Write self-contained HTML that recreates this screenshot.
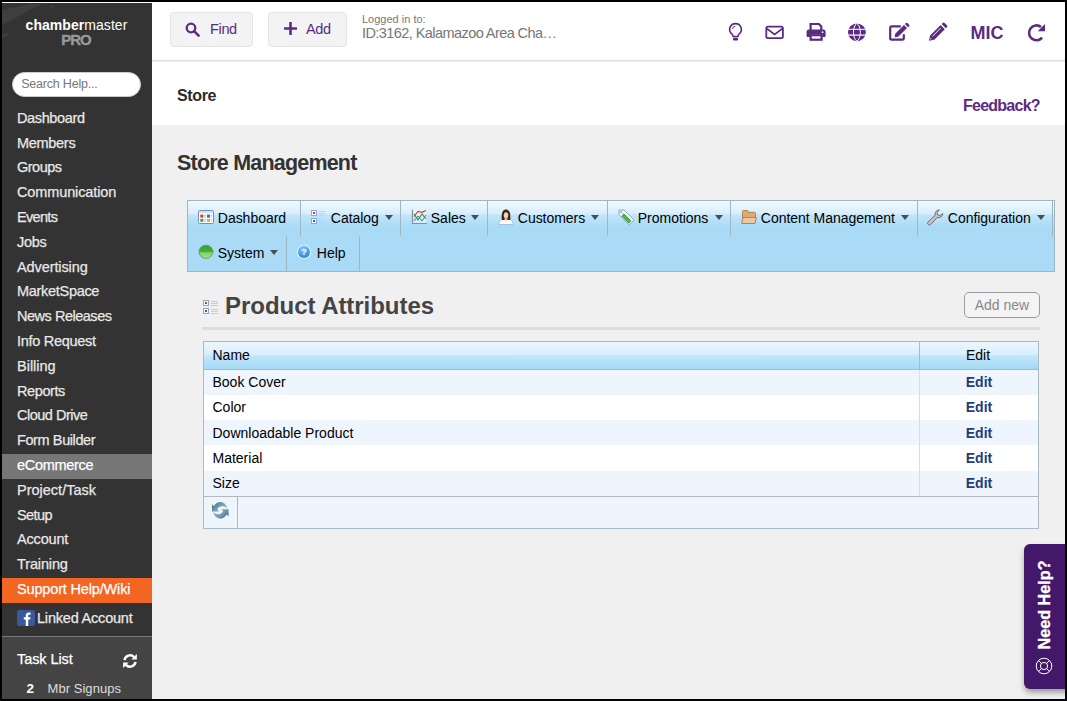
<!DOCTYPE html>
<html><head><meta charset="utf-8"><title>Store Management</title>
<style>
*{box-sizing:border-box;margin:0;padding:0}
html,body{width:1067px;height:701px;overflow:hidden;background:#000;font-family:"Liberation Sans",sans-serif}
#frame{position:absolute;left:2px;top:2px;width:1063px;height:697px;background:#f0f0f0;overflow:hidden}
/* ---------- sidebar ---------- */
#side{position:absolute;left:0;top:0;width:150px;height:697px;background:#333;color:#e8e8e8;overflow:hidden}
#side .topline{position:absolute;left:0;top:0;width:150px;height:1px;background:#fff}
#streak{position:absolute;left:0;top:1px}
#logo{position:absolute;left:-0.5px;top:16px;width:150px;text-align:center;font-size:14px;line-height:15px;color:#fff;letter-spacing:0.05px;white-space:nowrap}
#logo b{font-weight:bold}
#logo .pro{position:absolute;left:0;top:14px;width:150px;text-align:center;color:#999;font-weight:bold;font-size:15px;line-height:15px;letter-spacing:-1.1px;margin-left:-0.6px;-webkit-text-stroke:.3px #999}
#search{position:absolute;left:10.200px;top:69.500px;width:129px;height:25px;border-radius:13px;background:#fff;border:1px solid #ccc;color:#777;font-size:12.5px;line-height:23px;padding-left:8px;letter-spacing:-0.2px}
#nav{position:absolute;left:0;top:104.9px;width:150px;list-style:none}
#nav li{height:24.8px;line-height:22.8px;-webkit-text-stroke:0.25px currentColor;padding-left:15px;font-size:14.5px;color:#e8e8e8;white-space:nowrap;letter-spacing:-0.3px}
#nav li.act{background:#777;color:#fff}
#nav li.sup{background:#f26522;color:#fff}
#linked{position:absolute;left:15px;top:606px;height:20px;line-height:20px;font-size:14.5px;color:#e8e8e8;letter-spacing:-0.2px;-webkit-text-stroke:0.25px currentColor;white-space:nowrap}
#linked .fb{display:inline-block;vertical-align:top;margin-top:2px;margin-right:2px;width:18px;height:16px;background:#3b5998;border-radius:2px;position:relative}
#tasks{position:absolute;left:0;top:634px;width:150px;height:63px;background:#444;border-top:1px solid #777}
#tasks .t{position:absolute;left:15px;top:12px;font-size:14.5px;line-height:20px;color:#fff;letter-spacing:-0.08px;-webkit-text-stroke:0.25px currentColor}
#tasks .n{position:absolute;left:24.500px;top:44px;font-size:13.5px;line-height:16px;color:#fff;font-weight:bold}
#tasks .m{position:absolute;left:45.500px;top:44px;font-size:13px;line-height:16px;color:#ddd;letter-spacing:0.05px}
/* ---------- header ---------- */
#hdr{position:absolute;left:150px;top:0;width:913px;height:59px;background:#fff;border-bottom:1px solid #ddd}
.btn{position:absolute;top:10px;height:34.500px;border:1px solid #e4e4e4;border-radius:4px;background:#f3f3f3;color:#5b2b82;font-size:14.5px;line-height:33px;letter-spacing:-0.35px;white-space:nowrap}
.btn svg{position:absolute}
.btn span{position:absolute;top:0}
#logged{position:absolute;left:210px;top:10px;color:#777;white-space:nowrap}
#logged .l1{font-size:11px;line-height:13px;letter-spacing:0;display:block;position:relative;top:.6px}
#logged .l2{font-size:14.5px;line-height:17px;letter-spacing:-0.57px;display:block}
.ic{position:absolute}
#mic{position:absolute;left:818.600px;top:19.500px;font-weight:bold;font-size:18px;line-height:22px;color:#5b2b82;letter-spacing:-0.1px}
/* ---------- sub header ---------- */
#sub{position:absolute;left:150px;top:60px;width:913px;height:63px;background:#fff}
#sub .ttl{position:absolute;left:25px;top:24px;font-weight:bold;font-size:16px;line-height:20px;color:#2b2b2b;letter-spacing:-0.35px}
#sub .fb{position:absolute;left:811px;top:34px;font-weight:bold;font-size:16px;line-height:20px;color:#5b2b82;letter-spacing:-0.75px;white-space:nowrap}
#h1{position:absolute;left:175px;top:148px;font-weight:bold;font-size:21.500px;line-height:26px;color:#333;letter-spacing:-0.8px;white-space:nowrap}
/* ---------- store menu ---------- */
#menu{position:absolute;left:185px;top:198px;width:868px;height:72px;border:1px solid #9bb6c5;background:#a9dbf6;background:linear-gradient(#f6fbff 0,#eef8fe 1px,#d8eefb 12.500px,#c2e5fa 14px,#a9dbf6 26px,#a9dbf6 100%);font-size:14px;color:#000}
.mi{position:absolute;height:35px;border-right:1px solid #9fb5c2;white-space:nowrap}
.mi svg{position:absolute;top:8px}
.mi span{position:absolute;top:0;line-height:35px;margin-left:-0.2px;letter-spacing:-0.03px;padding-top:.3px}
.mi i{position:absolute;top:14px;width:0;height:0;border-left:4.5px solid transparent;border-right:4.5px solid transparent;border-top:5px solid #46505a}
/* ---------- section ---------- */
#sec .ico{position:absolute;left:201px;top:297px}
#sec h2{position:absolute;left:223px;top:290px;font-size:24px;line-height:28px;font-weight:bold;color:#444;white-space:nowrap;letter-spacing:-0.04px}
#addnew{position:absolute;left:962px;top:290px;width:76px;height:26px;border:1px solid #9c9c9c;border-radius:5px;background:#f4f4f4;color:#888;font-size:14px;line-height:24px;text-align:center}
#rule{position:absolute;left:200px;top:325px;width:838px;height:3px;background:#ddd}
/* ---------- grid ---------- */
#grid{position:absolute;left:201px;top:339px;width:836px;height:188px;border:1px solid #a7bac5;background:#fff;font-size:14px;color:#000}
#grid .hd{position:absolute;left:0;top:0;width:834px;height:28px;border-bottom:1px solid #a7bac5;background:linear-gradient(#ebf7fe 0,#d8eefb 46%,#c1e6fa 52%,#a5d9f5 100%)}
#grid .hd .c1{position:absolute;left:8.500px;top:0;line-height:27px}
#grid .hd .c2{position:absolute;left:715px;top:0;width:119px;height:27px;border-left:1px solid #a7bac5;text-align:center;line-height:27px;padding-right:2px}
.row{position:absolute;left:0;width:834px;line-height:25px}
.row.alt{background:#eff5fd}
.row .c1{position:absolute;left:8.500px;top:0}
.row .c2{position:absolute;left:715px;top:0;width:119px;height:100%;border-left:1px solid #dcdcdc;text-align:center;font-weight:bold;color:#1e3d7b}
#grid .ft{position:absolute;left:0;top:154px;width:834px;height:32px;border-top:1px solid #b4b8ba;background:#eff5fd}
#grid .ft .rf{position:absolute;left:0;top:0;width:34px;height:31px;border-right:1px solid #b6b6b6}
/* ---------- need help ---------- */
#help{position:absolute;left:1022px;top:542px;width:50px;height:145px;background:#43186b;border-radius:6px;box-shadow:0 4px 6px -1px rgba(0,0,0,.4)}
#help span{position:absolute;left:-40px;top:49.500px;width:120px;height:22px;line-height:22px;transform:rotate(-90deg);color:#fff;font-weight:bold;font-size:16.200px;text-align:center;white-space:nowrap;-webkit-text-stroke:.3px #fff}
</style></head><body>
<div id="frame">

<div id="side">
<svg id="streak" width="150" height="60" viewBox="0 0 150 60"><path d="M0 7.300L29 .7L41 1.200L30 5.600L20 11.200L8 18.200L0 22.300Z" fill="#3f3f3f"/><path d="M0 31L10 29.500L0 35.500Z" fill="#3d3d3d"/><path d="M49 3.500l2-1.500 1.200 1.500-1.500 2.500z" fill="#3c3c3c"/></svg>
<div class="topline"></div>
<div id="logo"><b>chamber</b>master<span class="pro">PRO</span></div>
<div id="search">Search Help...</div>
<ul id="nav">
<li style="letter-spacing:-0.37px">Dashboard</li>
<li style="letter-spacing:-0.3px">Members</li>
<li style="letter-spacing:-0.5px">Groups</li>
<li style="letter-spacing:-0.12px">Communication</li>
<li style="letter-spacing:-0.68px">Events</li>
<li style="letter-spacing:-0.3px">Jobs</li>
<li style="letter-spacing:-0.1px">Advertising</li>
<li style="letter-spacing:-0.3px">MarketSpace</li>
<li style="letter-spacing:-0.48px">News Releases</li>
<li style="letter-spacing:-0.3px">Info Request</li>
<li style="letter-spacing:0px">Billing</li>
<li style="letter-spacing:-0.4px">Reports</li>
<li style="letter-spacing:-0.5px">Cloud Drive</li>
<li style="letter-spacing:-0.4px">Form Builder</li>
<li class="act" style="letter-spacing:-0.3px">eCommerce</li>
<li style="letter-spacing:0px">Project/Task</li>
<li style="letter-spacing:-0.6px">Setup</li>
<li style="letter-spacing:-0.17px">Account</li>
<li style="letter-spacing:-0.13px">Training</li>
<li class="sup" style="letter-spacing:-0.16px">Support Help/Wiki</li>
</ul>
<div id="linked"><span class="fb"><svg width="17" height="16" viewBox="0 0 17 16"><path d="M11.2 16V9.6h2l.3-2.4h-2.3V5.8c0-.7.2-1.1 1.2-1.1h1.2V2.5c-.2 0-.9-.1-1.8-.1-1.8 0-3 1.100-3 3.100v1.700H6.800v2.400h2V16z" fill="#fff"/></svg></span>Linked Account</div>
<div id="tasks"><span class="t">Task List</span>
<svg class="ic" style="left:120px;top:15.500px" width="16" height="16" viewBox="0 0 14 14"><path d="M2.200 6.300A4.900 4.900 0 0 1 10.600 3.600" fill="none" stroke="#fff" stroke-width="2.200"/><path d="M13 .8V5.600H8.200z" fill="#fff"/><path d="M11.800 7.700A4.900 4.900 0 0 1 3.400 10.400" fill="none" stroke="#fff" stroke-width="2.200"/><path d="M1 13.200V8.400H5.800z" fill="#fff"/></svg>
<span class="n">2</span><span class="m">Mbr Signups</span></div>
</div>

<div id="hdr">
<div class="btn" style="left:18px;width:83px"><svg style="left:13.600px;top:8.500px" width="15" height="15" viewBox="0 0 15 15"><circle cx="6" cy="6" r="4.300" fill="none" stroke="#5b2b82" stroke-width="2.300"/><path d="M9.300 9.300L13.600 13.600" stroke="#5b2b82" stroke-width="2.600" stroke-linecap="round"/></svg><span style="left:39px">Find</span></div>
<div class="btn" style="left:116px;width:79px"><svg style="left:15px;top:9.300px" width="13" height="13" viewBox="0 0 13 13"><path d="M6.500 .8V12.200M.8 6.500H12.200" stroke="#5b2b82" stroke-width="2.600" stroke-linecap="round"/></svg><span style="left:37px">Add</span></div>
<div id="logged"><span class="l1">Logged in to:</span><span class="l2">ID:3162, Kalamazoo Area Cha…</span></div>

<svg class="ic" style="left:560px;top:0" width="353" height="59" viewBox="712 2 353 59" fill="#5b2b82" stroke="none">
<!-- lightbulb -->
<path d="M735.500 23.600a5.800 5.800 0 0 0-3.800 10.200c.9.900 1.300 1.700 1.400 2.700h4.800c.1-1 .5-1.800 1.400-2.700a5.800 5.800 0 0 0-3.800-10.200z" fill="none" stroke="#5b2b82" stroke-width="1.600"/>
<rect x="733" y="37.800" width="5" height="2.800" rx="1"/>
<path d="M732.600 28.800a3 3 0 0 1 2.700-2.700" fill="none" stroke="#5b2b82" stroke-width="1"/>
<!-- envelope -->
<rect x="766.300" y="26.600" width="16.600" height="11.600" rx="1.600" fill="none" stroke="#5b2b82" stroke-width="1.800"/>
<path d="M766.800 28.600l7.800 5.800 7.800-5.800" fill="none" stroke="#5b2b82" stroke-width="1.800"/>
<!-- printer -->
<path d="M810.600 30V24h8.200l2.500 2.500V30" fill="none" stroke="#5b2b82" stroke-width="2.200"/>
<path d="M808.800 29.500h14.600a2.200 2.200 0 0 1 2.200 2.200v4.400a1 1 0 0 1-1 1h-2.400v-2.900h-12.200v2.900h-2.400a1 1 0 0 1-1-1v-4.400a2.200 2.200 0 0 1 2.200-2.200z"/>
<rect x="810.600" y="35.200" width="11" height="4.500" fill="none" stroke="#5b2b82" stroke-width="2.200"/>
<circle cx="822.600" cy="32.200" r=".9" fill="#fff"/>
<!-- globe -->
<circle cx="856.900" cy="32.300" r="8.900"/>
<path d="M856.900 23.400c-4.600 3-4.600 14.800 0 17.800M856.900 23.400c4.600 3 4.600 14.800 0 17.800" fill="none" stroke="#fff" stroke-width="1"/>
<path d="M848 29.300h17.800" stroke="#fff" stroke-width="1" />
<path d="M848 35.100h17.800" stroke="#eee" stroke-width="1.300"/>
<!-- edit -->
<path d="M903.800 34.200V38.400a1.300 1.300 0 0 1-1.300 1.300H891.500a1.300 1.300 0 0 1-1.300-1.300V27.700a1.300 1.300 0 0 1 1.300-1.300h9.300" fill="none" stroke="#5b2b82" stroke-width="2.200"/>
<path d="M894.700 37.200l.5-3.400 8.800-8.800 3 3-8.800 8.800z"/>
<path d="M904.900 24.100l1.100-1.100a1.100 1.100 0 0 1 1.500 0l1.700 1.700a1.100 1.100 0 0 1 0 1.500l-1.100 1.100z"/>
<!-- pencil -->
<path d="M929 40.800l1.100-5.300 10.500-10.500 4.200 4.200-10.500 10.500z"/>
<path d="M941.600 24l1-1a1.400 1.400 0 0 1 2 0l2.300 2.300a1.400 1.400 0 0 1 0 2l-1 1z"/>
<path d="M932.500 36.300l8.200-8.200" stroke="#fff" stroke-width=".9"/>
<path d="M930.300 39.500l.4-1.600 1.200 1.200z" fill="#fff"/>
<!-- refresh -->
<path d="M1042.100 37.600A7.400 7.400 0 1 1 1041 27" fill="none" stroke="#5b2b82" stroke-width="2.600"/>
<path d="M1045 24v7.300h-7.300z"/>
</svg>
<div id="mic">MIC</div>
</div>

<div id="sub"><span class="ttl">Store</span><span class="fb">Feedback?</span></div>
<div id="h1">Store Management</div>

<div id="menu">
 <div class="mi" style="left:0;top:0;width:113px"><svg style="left:10px" width="16" height="16" viewBox="0 0 16 16"><rect x=".5" y="1.500" width="15" height="13" rx="1" fill="#fdfdfd" stroke="#6f8fbd"/><rect x="1" y="2" width="14" height="2.200" fill="#d3e0f3"/><rect x="2.300" y="5.600" width="3" height="3" fill="#e0392d"/><rect x="2.300" y="9.800" width="3" height="3" fill="#3aa537"/><rect x="9" y="5.600" width="3" height="3" fill="#3b6fc9"/><rect x="9" y="9.800" width="3" height="3" fill="#e8a917"/><path d="M6 6.500h2M6 8h2M6 10.700h2M6 12.200h2M12.700 6.500h1.600M12.700 8h1.600M12.700 10.700h1.600M12.700 12.200h1.600" stroke="#b9bec6" stroke-width=".8"/></svg><span style="left:30px">Dashboard</span></div>
 <div class="mi" style="left:113px;top:0;width:100px"><svg style="left:10px" width="16" height="16" viewBox="0 0 16 16"><rect x=".5" y="1.500" width="5" height="5" fill="#fff" stroke="#86abe6"/><rect x="2" y="3" width="2" height="2" fill="#e23a30"/><rect x=".5" y="9.500" width="5" height="5" fill="#fff" stroke="#86abe6"/><rect x="2" y="11" width="2" height="2" fill="#3565b5"/><path d="M7.500 2.500h6.500M7.500 4.500h6.500M7.500 6.500h6.500M7.500 10.500h6.500M7.500 12.500h6.500M7.500 14.500h6.500" stroke="#c9ced6" stroke-width=".9"/></svg><span style="left:30px">Catalog</span><i style="left:84px"></i></div>
 <div class="mi" style="left:213px;top:0;width:87px"><svg style="left:10px" width="16" height="16" viewBox="0 0 16 16"><rect x="1.500" y=".8" width="14" height="13.200" fill="#eef5fb" opacity=".7"/><path d="M1.500 .5V14.500H16" fill="none" stroke="#8a8f96" stroke-width="1.200"/><path d="M3 7.500l4-5 4 .8 4-1.800" fill="none" stroke="#e0392d" stroke-width="1.200"/><path d="M3 5l4 6 4-6 4 5" fill="none" stroke="#2f9e3a" stroke-width="1.200"/><path d="M3 12l4-5 4 5 4-6" fill="none" stroke="#3f78c8" stroke-width="1"/></svg><span style="left:30px">Sales</span><i style="left:70px"></i></div>
 <div class="mi" style="left:300px;top:0;width:120px"><svg style="left:10px" width="16" height="16" viewBox="0 0 16 16"><path d="M.8 15.500c.2-3.600 1.800-5.300 7.200-5.300s7 1.700 7.200 5.300z" fill="#fafcff" stroke="#a5bfe3"/><path d="M3.800 11C3 4 4.800.5 8 .5S13 4 12.200 11z" fill="#3b2a14"/><path d="M5.800 6.200C5.800 4 6.800 3.300 8 3.300s2.200.7 2.200 2.900c0 2-1 3.600-2.200 3.600S5.800 8.200 5.800 6.200z" fill="#f6d3b3"/><path d="M6.400 9.500h3.200l-.4 2.300h-2.400z" fill="#f1c6a2"/></svg><span style="left:30px">Customers</span><i style="left:103px"></i></div>
 <div class="mi" style="left:420px;top:0;width:123px"><svg style="left:9.500px;top:8px" width="17" height="17" viewBox="0 0 17 17"><path d="M1 1h5l10 10-4.800 4.800L1 5.800z" fill="#fdfdff" stroke="#8aa8da" stroke-width="1"/><path d="M6 4.800l7 7-2.300 2.300-7-7z" fill="#4cb848" stroke="#2f8a2f" stroke-width=".8" stroke-linejoin="round"/><circle cx="3.200" cy="3.200" r="1" fill="#fff" stroke="#7d92b5" stroke-width=".7"/></svg><span style="left:30px">Promotions</span><i style="left:107px"></i></div>
 <div class="mi" style="left:543px;top:0;width:187px"><svg style="left:10px" width="16" height="16" viewBox="0 0 16 16"><path d="M1.500 13.500V2.500a1 1 0 0 1 1-1h4l1.500 1.800h5.500a1 1 0 0 1 1 1v9.200z" fill="#dca978" stroke="#b9824e"/><path d="M.700 14.500l1.300-6h13.300l-1.300 6z" fill="#edc9a3" stroke="#b9824e"/></svg><span style="left:30px">Content Management</span><i style="left:170px"></i></div>
 <div class="mi" style="left:730px;top:0;width:135px"><svg style="left:9px" width="17" height="17" viewBox="0 0 17 17"><path d="M15.800 4.600a4.100 4.100 0 0 1-5.500 3.800l-6.500 7a1.800 1.800 0 0 1-2.600-2.600l7-6.500A4.100 4.100 0 0 1 12.500 1l-2.400 2.400.6 2.500 2.500.6z" fill="#c4c4c4" stroke="#6f6f6f" stroke-width="1"/></svg><span style="left:30px">Configuration</span><i style="left:119px"></i></div>
 <div class="mi" style="left:0;top:35px;width:99px"><svg style="left:9.500px;top:8px" width="16" height="16" viewBox="0 0 16 16"><defs><linearGradient id="gg" x1="0" y1="0" x2="0" y2="1"><stop offset="0" stop-color="#3c9f34"/><stop offset=".48" stop-color="#43ac39"/><stop offset=".56" stop-color="#7fce6b"/><stop offset="1" stop-color="#a4e08f"/></linearGradient></defs><ellipse cx="8" cy="7.800" rx="7" ry="6.600" fill="url(#gg)" stroke="#3f9a36" stroke-width=".7"/></svg><span style="left:30px">System</span><i style="left:82px"></i></div>
 <div class="mi" style="left:99px;top:35px;width:73px"><svg style="left:9px;top:8px" width="16" height="16" viewBox="0 0 16 16"><defs><radialGradient id="hg" cx=".45" cy=".3" r=".8"><stop offset="0" stop-color="#8fd0ff"/><stop offset=".6" stop-color="#3d9be6"/><stop offset="1" stop-color="#2b7fc7"/></radialGradient></defs><circle cx="8" cy="8" r="7.200" fill="#d9eefc"/><circle cx="8" cy="8" r="5.900" fill="url(#hg)"/><text x="8" y="11.300" font-family="Liberation Sans,sans-serif" font-size="9" font-weight="bold" fill="#fff" text-anchor="middle">?</text></svg><span style="left:30px">Help</span></div>
</div>

<div id="sec">
<svg class="ico" width="16" height="16" viewBox="0 0 16 16"><rect x=".5" y="1.500" width="5" height="5" fill="#fff" stroke="#8aa6c8"/><rect x="2" y="3" width="2" height="2" fill="#d33"/><rect x=".5" y="9.500" width="5" height="5" fill="#fff" stroke="#8aa6c8"/><rect x="2" y="11" width="2" height="2" fill="#36a"/><path d="M8 2.500h7M8 4.500h7M8 6.500h7M8 10.500h7M8 12.500h7M8 14.500h7" stroke="#c5ccd4"/></svg>
<h2>Product Attributes</h2>
<div id="addnew">Add new</div>
<div id="rule"></div>
</div>

<div id="grid">
 <div class="hd"><span class="c1">Name</span><span class="c2">Edit</span></div>
 <div class="row alt" style="top:28px;height:25px"><span class="c1">Book Cover</span><span class="c2">Edit</span></div>
 <div class="row" style="top:53px;height:25px"><span class="c1">Color</span><span class="c2">Edit</span></div>
 <div class="row alt" style="top:78px;height:25px;line-height:27px"><span class="c1">Downloadable Product</span><span class="c2">Edit</span></div>
 <div class="row" style="top:103px;height:25.500px;line-height:27px"><span class="c1">Material</span><span class="c2">Edit</span></div>
 <div class="row alt" style="top:128.500px;height:25.500px"><span class="c1">Size</span><span class="c2">Edit</span></div>
 <div class="ft"><div class="rf"><svg style="position:absolute;left:7.700px;top:5.300px" width="17" height="17" viewBox="0 0 17 17"><defs><linearGradient id="rg" x1="0" y1="0" x2="16.500" y2="16.600" gradientUnits="userSpaceOnUse"><stop offset="0" stop-color="#31566a"/><stop offset=".3" stop-color="#6f98ab"/><stop offset=".5" stop-color="#86abbb"/><stop offset=".7" stop-color="#6f98ab"/><stop offset="1" stop-color="#31566a"/></linearGradient></defs><path id="ra" d="M0 2.300V9.400H7.100L5.300 7.600C6.500 4.200 11.500 3.200 15.100 6C13.800 0 6.500-3 1.900 4.200z" fill="url(#rg)"/><path d="M16.500 14.300V7.200H9.400l1.800 1.800C10 12.400 5 13.400 1.400 10.600C2.700 16.600 10 19.600 14.600 12.400z" fill="url(#rg)"/></svg></div></div>
</div>

<div id="help"><span>Need Help?</span>
<svg style="position:absolute;left:11px;top:113px" width="18" height="18" viewBox="0 0 18 18"><circle cx="9" cy="9" r="7.800" fill="none" stroke="#fff" stroke-width="1"/><circle cx="9" cy="9" r="3.600" fill="none" stroke="#fff" stroke-width="1"/><path d="M3.500 3.500l3 3M14.500 3.500l-3 3M3.500 14.500l3-3M14.500 14.500l-3-3" stroke="#fff" stroke-width="1"/></svg>
</div>

</div>
</body></html>
